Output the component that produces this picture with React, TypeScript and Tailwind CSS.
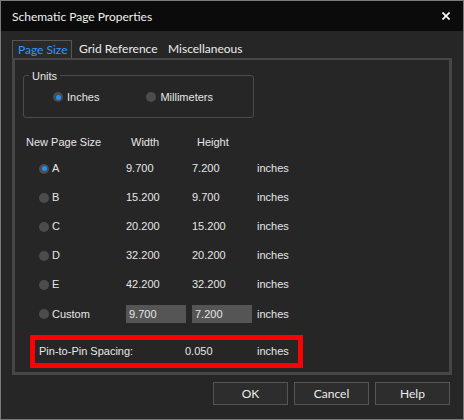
import React from 'react';

// Page size table rows
const sizes = [
    { id: 'A', w: '9.700', h: '7.200' },
    { id: 'B', w: '15.200', h: '9.700' },
    { id: 'C', w: '20.200', h: '15.200' },
    { id: 'D', w: '32.200', h: '20.200' },
    { id: 'E', w: '42.200', h: '32.200' },
];

const uiFont = { fontFamily: 'Lato, "Noto Sans", sans-serif' };

const Radio: React.FC<{ checked?: boolean }> = ({ checked }) => (
    <span className="flex h-[10px] w-[10px] shrink-0 items-center justify-center rounded-full bg-[#4c4c4c]">
        {checked && <span className="h-[5px] w-[5px] rounded-full bg-[#1e90ff]" />}
    </span>
);

const App: React.FC = () => {
    return (
        <div
            className="flex h-[420px] w-[464px] flex-col border border-[#7a7a7a] bg-[#262626] text-[11px] text-[#e6e6e6]"
            style={{ fontFamily: '"Liberation Sans", Arial, sans-serif' }}
        >
            {/* Title bar */}
            <div className="flex h-[30px] shrink-0 items-center justify-between bg-[#0b0b0b] pl-[11px] pr-[13px] pt-[2px]">
                <span className="text-[12px] text-[#f0f0f0]" style={uiFont}>
                    Schematic Page Properties
                </span>
                <svg width="8" height="8" viewBox="0 0 8 8" className="mb-[3px]">
                    <path d="M0.5 0.5 L7.5 7.5 M7.5 0.5 L0.5 7.5" stroke="#ffffff" strokeWidth="1.6" />
                </svg>
            </div>

            {/* Body */}
            <div className="flex flex-col px-[11px] pt-[9px]">
                {/* Tabs */}
                <div className="flex h-[18px] items-end whitespace-nowrap text-[12px]" style={uiFont}>
                    <div className="flex h-[18px] w-[60px] items-center border border-b-0 border-[#565656] bg-[#2a2a2a] pl-[5px] text-[#2a9bff]">
                        Page Size
                    </div>
                    <div className="flex h-[18px] w-[89px] items-center pl-[7px] text-[#ececec]">Grid Reference</div>
                    <div className="flex h-[18px] items-center pl-[7px] text-[#ececec]">Miscellaneous</div>
                </div>

                {/* Tab panel */}
                <div className="box-border flex h-[317px] w-[440px] flex-col border-[3px] border-t-2 border-[#464646]">
                    {/* Units group */}
                    <div className="relative ml-[8px] mt-[15px] flex h-[43px] w-[231px] items-center rounded-[3px] border border-[#4b4b4b] pt-[1px]">
                        <span className="absolute -top-[8px] left-[5px] bg-[#262626] px-[3px]">Units</span>
                        <div className="ml-[29px] flex items-center gap-[4px]">
                            <Radio checked />
                            <span>Inches</span>
                        </div>
                        <div className="ml-[47px] flex items-center gap-[4px]">
                            <Radio />
                            <span>Millimeters</span>
                        </div>
                    </div>

                    {/* Header */}
                    <div className="mt-[12px] flex h-[24px] items-center pl-[11px]">
                        <span className="w-[105px]">New Page Size</span>
                        <span className="w-[66px]">Width</span>
                        <span>Height</span>
                    </div>

                    {/* Size rows */}
                    {sizes.map((s) => (
                        <div key={s.id} className="flex h-[29px] items-center pl-[24px]">
                            <div className="flex w-[87px] items-center gap-[3px]">
                                <Radio checked={s.id === 'A'} />
                                <span>{s.id}</span>
                            </div>
                            <span className="w-[66px]">{s.w}</span>
                            <span className="w-[65px]">{s.h}</span>
                            <span>inches</span>
                        </div>
                    ))}

                    {/* Custom row */}
                    <div className="flex h-[30px] items-center pl-[24px]">
                        <div className="flex w-[87px] items-center gap-[3px]">
                            <Radio />
                            <span>Custom</span>
                        </div>
                        <div className="w-[66px]">
                            <div className="flex h-[18px] w-[60px] items-center bg-[#555555] pl-[3px]">9.700</div>
                        </div>
                        <div className="w-[65px]">
                            <div className="flex h-[18px] w-[60px] items-center bg-[#555555] pl-[3px]">7.200</div>
                        </div>
                        <span>inches</span>
                    </div>

                    {/* Pin spacing (highlighted) */}
                    <div className="ml-[15px] mt-[6px] box-border flex h-[33px] w-[273px] items-center border-[5px] border-[#ff0000] pl-[4px]">
                        <span className="w-[146px]">Pin-to-Pin Spacing:</span>
                        <span className="w-[72px]">0.050</span>
                        <span>inches</span>
                    </div>
                </div>

                {/* Buttons */}
                <div className="mt-[7px] flex justify-end gap-[6px] pr-[2px] text-[12px]" style={uiFont}>
                    {['OK', 'Cancel', 'Help'].map((b) => (
                        <button
                            key={b}
                            className="flex h-[23px] w-[75px] items-center justify-center border border-[#555555] bg-[#2d2d2d] text-[#ececec]"
                        >
                            {b}
                        </button>
                    ))}
                </div>
            </div>
        </div>
    );
};

export default App;
